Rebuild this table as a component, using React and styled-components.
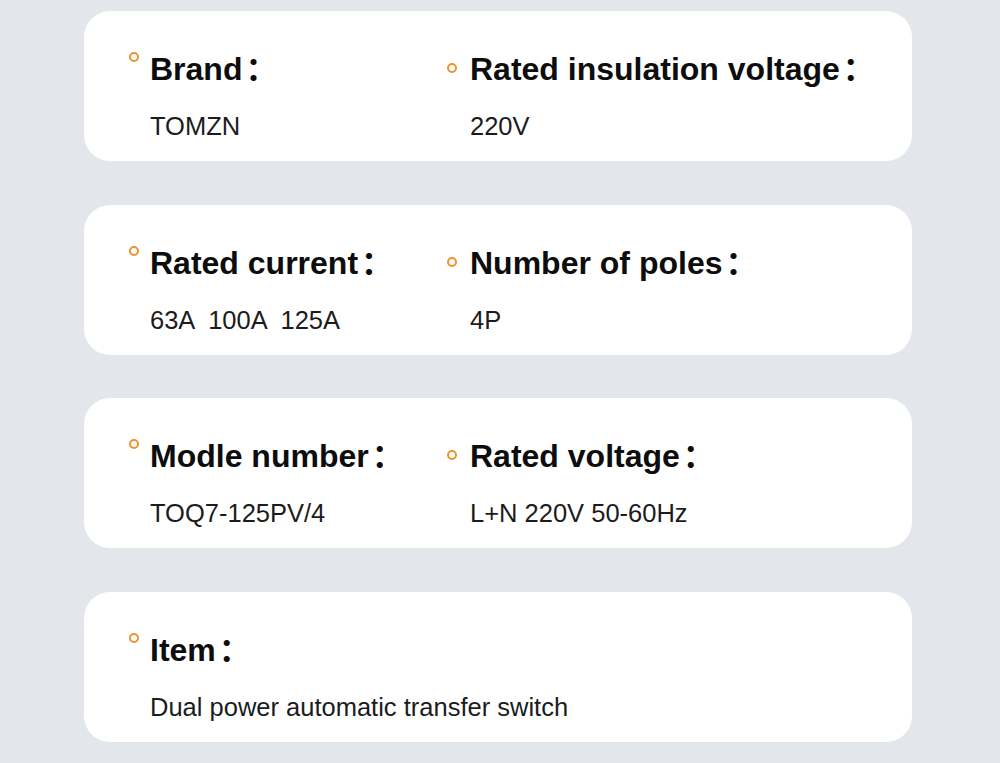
import React from 'react';
import styled, { createGlobalStyle } from 'styled-components';

const specs = [
  [
    { label: 'Brand', value: 'TOMZN' },
    { label: 'Rated insulation voltage', value: '220V' },
  ],
  [
    { label: 'Rated current', value: '63A  100A  125A' },
    { label: 'Number of poles', value: '4P' },
  ],
  [
    { label: 'Modle number', value: 'TOQ7-125PV/4' },
    { label: 'Rated voltage', value: 'L+N 220V 50-60Hz' },
  ],
  [{ label: 'Item', value: 'Dual power automatic transfer switch' }],
];

const GlobalStyle = createGlobalStyle`
  html, body {
    margin: 0;
    padding: 0;
    background: #e3e6ea;
  }
  body {
    font-family: "Liberation Sans", Arial, "Noto Sans CJK SC", sans-serif;
  }
`;

const Page = styled.div`
  display: flex;
  flex-direction: column;
  gap: 43.5px;
  padding: 11px 88px 20px 84px;
  min-height: 763px;
  box-sizing: border-box;
`;

const Card = styled.section`
  height: 150px;
  box-sizing: border-box;
  background: #ffffff;
  border-radius: 26px;
  padding: 37px 0 0 45px;
  display: grid;
  grid-template-columns: 318px auto;
  align-items: start;
`;

const Field = styled.div`
  display: flex;
  align-items: flex-start;
  gap: ${(props) => (props.second ? '13px' : '11px')};
`;

const Dot = styled.span`
  flex: none;
  width: 10px;
  height: 10px;
  margin-top: ${(props) => (props.second ? '15px' : '4px')};
  border: 2.2px solid #f0912e;
  border-radius: 50%;
  box-sizing: border-box;
`;

const Body = styled.div`
  display: flex;
  flex-direction: column;
  gap: 24px;
`;

const Label = styled.h3`
  margin: 0;
  font-family: "Liberation Sans", Arial, "Noto Sans CJK SC", sans-serif;
  font-size: 32px;
  line-height: 36px;
  font-weight: bold;
  color: #0d0d0d;
  white-space: nowrap;
`;

const Colon = styled.span`
  margin-left: 3px;
  font-family: "Noto Sans CJK SC", sans-serif;
  font-weight: bold;
`;

const Value = styled.p`
  margin: 0;
  font-size: 25.5px;
  line-height: 30px;
  color: #1c1c1c;
  white-space: pre;
`;

const App = () => (
  <>
    <GlobalStyle />
    <Page>
      {specs.map((row, i) => (
        <Card key={i}>
          {row.map((f, j) => (
            <Field key={f.label} second={j === 1}>
              <Dot second={j === 1} />
              <Body>
                <Label>
                  {f.label}
                  <Colon>：</Colon>
                </Label>
                <Value>{f.value}</Value>
              </Body>
            </Field>
          ))}
        </Card>
      ))}
    </Page>
  </>
);

export default App;
